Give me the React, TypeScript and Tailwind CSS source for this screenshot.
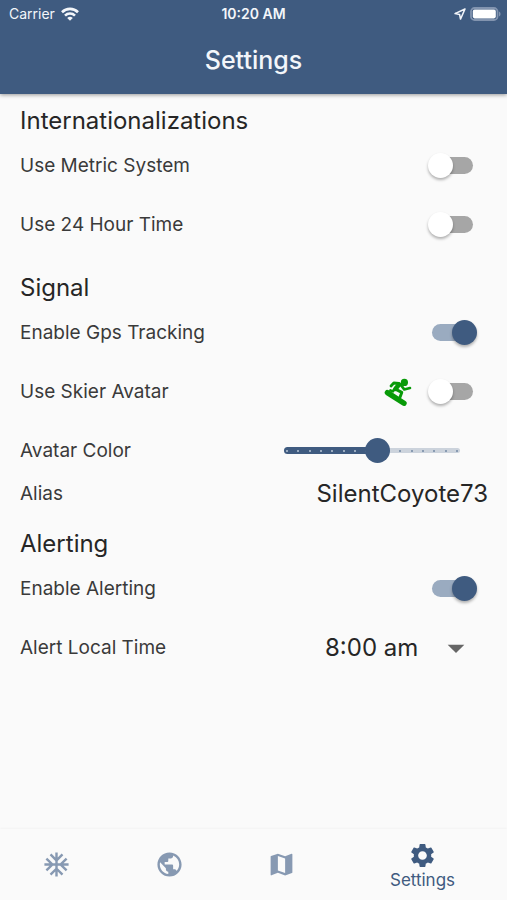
import { useState } from "react";
import type { ReactNode } from "react";
import { MdAcUnit, MdArrowDropDown, MdMap, MdPublic, MdSettings } from "react-icons/md";

const AVATAR_COLORS = 16;

const Heading = ({ children }: { children: ReactNode }) => (
  <h2 className="text-2xl leading-[30px] text-[#262626]">{children}</h2>
);

type RowProps = {
  id: string;
  label: string;
  compact?: boolean;
  children: ReactNode;
};

const Row = ({ id, label, compact, children }: RowProps) => (
  <div className={`flex items-center justify-between ${compact ? "h-7" : "h-[59px]"}`}>
    <label htmlFor={id} className="text-[19px] leading-7 text-[#3a3a3a]">
      {label}
    </label>
    {children}
  </div>
);

const Switch = ({ id, initial = false }: { id: string; initial?: boolean }) => {
  const [on, setOn] = useState(initial);

  return (
    <span className="relative mr-[11px] flex h-[25px] w-[49px] items-center px-1">
      <input
        id={id}
        type="checkbox"
        role="switch"
        checked={on}
        onChange={(e) => setOn(e.target.checked)}
        className="peer h-[17px] w-full cursor-pointer appearance-none rounded-full bg-[#a6a6a6] checked:bg-[#9aabc0]"
      />
      <span
        className="
          pointer-events-none absolute left-0 top-0
          size-[25px] rounded-full bg-white
          shadow-[0_2px_3px_rgba(0,0,0,0.3)]
          peer-checked:left-6 peer-checked:bg-[#3f5b80]
        "
      />
    </span>
  );
};

const ColorSlider = ({ id }: { id: string }) => {
  const [value, setValue] = useState(8);

  return (
    <div className="relative mr-[18px] flex h-[25px] w-[196px] items-center">
      {/* Track with one tick for each color */}
      <div className="absolute inset-x-[10px] h-[5px] rounded-full bg-[#ccd3dc]" />
      <div
        className="absolute left-[10px] h-[7px] rounded-full bg-[#3f5b80]"
        style={{ width: `${(value / (AVATAR_COLORS - 1)) * 90}%` }}
      />
      <div className="absolute inset-x-3 flex justify-between">
        {Array.from({ length: AVATAR_COLORS }, (_, i) => (
          <span
            key={i}
            className={`size-[2px] rounded-full ${i < value ? "bg-[#b9c6d6]" : "bg-[#7388a5]"}`}
          />
        ))}
      </div>
      <input
        id={id}
        type="range"
        min={0}
        max={AVATAR_COLORS - 1}
        value={value}
        onChange={(e) => setValue(Number(e.target.value))}
        className="
          relative h-[25px] w-full cursor-pointer appearance-none bg-transparent
          [&::-webkit-slider-thumb]:size-[25px]
          [&::-webkit-slider-thumb]:appearance-none
          [&::-webkit-slider-thumb]:rounded-full
          [&::-webkit-slider-thumb]:bg-[#3f5b80]
        "
      />
    </div>
  );
};

const SnowboarderIcon = () => (
  <svg
    viewBox="0 0 28 28"
    className="size-7 text-[#089a08]"
    fill="none"
    stroke="currentColor"
    strokeLinecap="round"
    strokeLinejoin="round"
  >
    <circle cx="20.4" cy="4.4" r="3.6" fill="currentColor" stroke="none" />
    <path d="M3.4 14.6 20 25.2" strokeWidth="5.4" />
    <path d="M7 8 9.8 5 15 5.4" strokeWidth="2.8" />
    <path d="M15 6.6 11.6 10.8" strokeWidth="4.6" />
    <path d="M16.6 6.6 20.2 11.4 26 10" strokeWidth="2.6" />
    <path d="M12.4 11.6 17.8 14.4 15.9 19.4" strokeWidth="2.9" />
    <path d="M11 10.6 8.8 13.4 6.4 12.4" strokeWidth="2.6" />
  </svg>
);

const StatusBar = () => (
  <div className="grid h-7 grid-cols-3 items-center px-1.5 text-sm">
    <div className="flex items-center gap-1.5 pl-[3px]">
      <span>Carrier</span>
      <svg viewBox="0 0 18 14" className="h-3.5 w-[18px]" fill="none" stroke="currentColor" strokeWidth="2.6">
        <path d="M1 5.2a11.4 11.4 0 0 1 16 0" />
        <path d="M4 8.6a7.1 7.1 0 0 1 10 0" />
        <path d="M9 13.8 6.2 11a4 4 0 0 1 5.6 0z" fill="currentColor" stroke="none" />
      </svg>
    </div>
    <span className="text-center font-semibold">10:20 AM</span>
    <div className="flex items-center justify-end gap-1">
      <svg viewBox="0 0 12 12" className="size-3" fill="none" stroke="currentColor" strokeWidth="1.5" strokeLinejoin="round">
        <path d="M11 1 1 5.6l4.6.9.9 4.6z" />
      </svg>
      <svg viewBox="0 0 31 14" className="h-3.5 w-[31px]">
        <rect x="1" y="1" width="26.5" height="12" rx="3.6" fill="none" stroke="#8294af" strokeWidth="1.8" />
        <rect x="2.8" y="2.6" width="23" height="8.8" rx="1.8" fill="#fff" />
        <path d="M29 4.6a2.6 2.6 0 0 1 0 4.8z" fill="#8294af" />
      </svg>
    </div>
  </div>
);

const App = () => {
  const [alias, setAlias] = useState("SilentCoyote73");
  const [alertTime, setAlertTime] = useState("8:00 am");

  return (
    <div className="flex min-h-screen flex-col bg-[#fafafa] font-[Inter,sans-serif]">
      <header className="relative bg-[#3f5b80] text-[#f3f6fa] shadow-[0_1px_4px_rgba(0,0,0,0.4)]">
        <StatusBar />
        <h1 className="pb-[18px] pt-4 text-center text-[25px] font-medium leading-8">Settings</h1>
      </header>

      <main className="flex-1 pl-5 pr-[19px]">
        <section className="pt-3">
          <Heading>Internationalizations</Heading>
          <Row id="metric" label="Use Metric System">
            <Switch id="metric" />
          </Row>
          <Row id="hour24" label="Use 24 Hour Time">
            <Switch id="hour24" />
          </Row>
        </section>

        <section className="pt-[19px]">
          <Heading>Signal</Heading>
          <Row id="gps" label="Enable Gps Tracking">
            <Switch id="gps" initial />
          </Row>
          <Row id="skier" label="Use Skier Avatar">
            <div className="flex items-center gap-4">
              <SnowboarderIcon />
              <Switch id="skier" />
            </div>
          </Row>
          <Row id="color" label="Avatar Color">
            <ColorSlider id="color" />
          </Row>
          <Row id="alias" label="Alias" compact>
            <input
              id="alias"
              type="text"
              value={alias}
              onChange={(e) => setAlias(e.target.value)}
              className="w-60 bg-transparent text-right text-2xl text-[#262626]"
            />
          </Row>
        </section>

        <section className="pt-[21px]">
          <Heading>Alerting</Heading>
          <Row id="alerting" label="Enable Alerting">
            <Switch id="alerting" initial />
          </Row>
          <Row id="time" label="Alert Local Time">
            <div className="relative mr-4 flex items-center">
              <select
                id="time"
                value={alertTime}
                onChange={(e) => setAlertTime(e.target.value)}
                className="w-[147px] cursor-pointer appearance-none bg-transparent text-2xl text-[#262626]"
              >
                <option>7:00 am</option>
                <option>8:00 am</option>
                <option>9:00 am</option>
              </select>
              <MdArrowDropDown className="pointer-events-none absolute -right-1 size-10 text-[#666]" />
            </div>
          </Row>
        </section>
      </main>

      <nav className="flex h-[71px] bg-[#fafafa] text-[#8799b2] shadow-[0_-1px_2px_rgba(0,0,0,0.03)]">
        <a href="#snow" aria-label="Snow" className="flex flex-2 items-center justify-center">
          <MdAcUnit className="size-[29px]" />
        </a>
        <a href="#world" aria-label="World" className="flex flex-2 items-center justify-center">
          <MdPublic className="size-[29px]" />
        </a>
        <a href="#map" aria-label="Map" className="flex flex-2 items-center justify-center">
          <MdMap className="size-[29px]" />
        </a>
        <a href="#settings" className="flex flex-3 flex-col items-center pt-3 text-[#3f5b80]">
          <MdSettings className="size-[29px]" />
          <span className="text-[17px] leading-5">Settings</span>
        </a>
      </nav>
    </div>
  );
};

export default App;
